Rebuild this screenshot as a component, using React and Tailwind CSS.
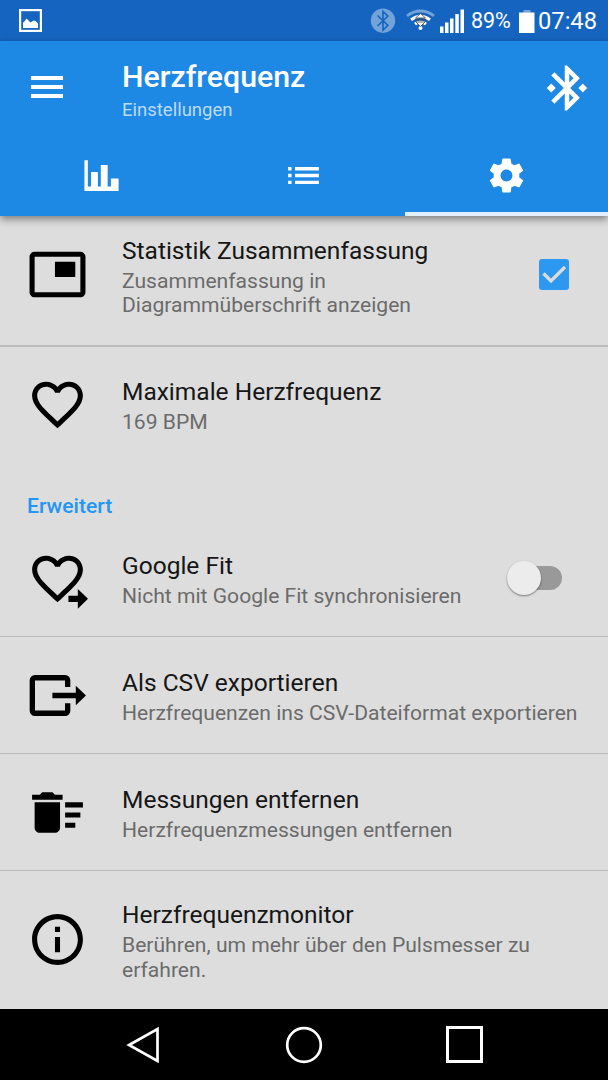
import React, { useState } from "react";

// material icon outlines, 24 x 24 grid
const paths = {
  pip: "M19 7h-8v6h8V7zm2-4H3c-1.1 0-2 .9-2 2v14c0 1.1.9 1.98 2 1.98h18c1.1 0 2-.88 2-1.98V5c0-1.1-.9-2-2-2zm0 16.01H3V4.98h18v14.03z",
  heart:
    "M16.5 3c-1.74 0-3.41.81-4.5 2.09C10.91 3.81 9.24 3 7.5 3 4.42 3 2 5.42 2 8.5c0 3.78 3.4 6.86 8.55 11.54L12 21.35l1.45-1.32C18.6 15.36 22 12.28 22 8.5 22 5.42 19.58 3 16.5 3zm-4.4 15.55l-.1.1-.1-.1C7.14 14.24 4 11.39 4 8.5 4 6.5 5.5 5 7.5 5c1.54 0 3.04.99 3.57 2.36h1.87C13.46 5.99 14.96 5 16.5 5c2 0 3.5 1.5 3.5 3.5 0 2.89-3.14 5.74-7.9 10.05z",
  heartArrow: "M16.3 18.8H20V16.100l4 3.900-4 3.900v-2.700h-3.700z",
  sweep:
    "M15 16h4v2h-4zm0-8h7v2h-7zm0 4h6v2h-6zM3 18c0 1.1.9 2 2 2h6c1.1 0 2-.9 2-2V8H3v10zM14 5h-3l-1-1H6L5 5H2v2h12z",
  info: "M11 17h2v-6h-2v6zm1-15C6.48 2 2 6.48 2 12s4.48 10 10 10 10-4.48 10-10S17.52 2 12 2zm0 18c-4.41 0-8-3.59-8-8s3.59-8 8-8 8 3.59 8 8-3.59 8-8 8zM11 9h2V7h-2v2z",
  list: "M3 13h2v-2H3v2zm0 4h2v-2H3v2zm0-8h2V7H3v2zm4 4h14v-2H7v2zm0 4h14v-2H7v2zM7 7v2h14V7H7z",
  gear: "M19.43 12.98c.04-.32.07-.64.07-.98s-.03-.66-.07-.98l2.11-1.65c.19-.15.24-.42.12-.64l-2-3.46c-.12-.22-.39-.3-.61-.22l-2.49 1c-.52-.4-1.08-.73-1.69-.98l-.38-2.65C14.46 2.18 14.25 2 14 2h-4c-.25 0-.46.18-.49.42l-.38 2.65c-.61.25-1.17.59-1.69.98l-2.49-1c-.23-.09-.49 0-.61.22l-2 3.46c-.13.22-.07.49.12.64l2.11 1.65c-.04.32-.07.65-.07.98s.03.66.07.98l-2.11 1.65c-.19.15-.24.42-.12.64l2 3.46c.12.22.39.3.61.22l2.49-1c.52.4 1.08.73 1.69.98l.38 2.65c.03.24.24.42.49.42h4c.25 0 .46-.18.49-.42l.38-2.65c.61-.25 1.17-.59 1.69-.98l2.49 1c.23.09.49 0 .61-.22l2-3.46c.12-.22.07-.49-.12-.64l-2.11-1.65zM12 15.5c-1.93 0-3.5-1.57-3.5-3.5s1.57-3.5 3.5-3.5 3.5 1.57 3.5 3.5-1.57 3.5-3.5 3.5z",
  bluetooth:
    "M7 12l-2-2-2 2 2 2 2-2zm10.71-4.29L12 2h-1v7.59L6.41 5 5 6.41 10.59 12 5 17.59 6.41 19 11 14.41V22h1l5.71-5.71-4.3-4.29 4.3-4.29zM13 5.83l1.88 1.88L13 9.59V5.83zm1.88 10.46L13 18.17v-3.76l1.88 1.88zM19 10l-2 2 2 2 2-2-2-2z",
  chart: "M2 3.100h2V18.400h1.900V9.900h4v8.500h1.700V5.800h4v12.600h1.900V13.800H22v7.200H2z",
};

function Icon({ d, className, children }) {
  return (
    <svg viewBox="0 0 24 24" fill="currentColor" className={className}>
      <path d={d} />
      {children}
    </svg>
  );
}

function StatusBar() {
  return (
    <div className="flex h-[41px] items-center bg-[#1565c0] pl-[19px] text-white">
      <svg viewBox="0 0 23 23" className="h-[23px] w-[23px] shrink-0">
        <rect x="1.1" y="1.1" width="20.8" height="20.8" fill="none" stroke="#fff" strokeWidth="2.2" />
        <path fill="#fff" d="M4 19v-5.500l1-.500 2.500-3.500 4 4 3-2 2 .500 2.500 2.500V19z" />
      </svg>

      <svg viewBox="0 0 102 30" className="ml-[327px] h-[30px] w-[102px] shrink-0">
        {/* bluetooth */}
        <circle cx="14" cy="14.700" r="12.2" fill="#73a3d9" />
        <path d="M8.500 9.500l10.400 9.800-4.900 4.700V5.400l4.900 4.700L8.500 20" fill="none" stroke="#1565c0" strokeWidth="1.6" />
        {/* wifi */}
        <path d="M38 9.800q13.500-9.500 27 0" fill="none" stroke="#73a3d9" strokeWidth="2.8" />
        <path d="M42 13.800q9.500-7 19 0" fill="none" stroke="#fff" strokeWidth="3" />
        <path d="M46 18q5.500-4 11 0" fill="none" stroke="#fff" strokeWidth="3" />
        <circle cx="51.500" cy="22" r="2" fill="#fff" />
        <path d="M51.500 7.500l5 4.500h-10zM51.500 20.500l4.500-4.500h-9z" fill="#fff" stroke="#444" strokeWidth=".8" />
        <path d="M46.500 14h10" stroke="#444" strokeWidth="1" />
        {/* signal */}
        <path fill="#fff" d="M71 20.500h3.500V27H71zM76 16.500h3.500V27H76zM81 12.500h3.500V27H81zM86.300 8h3.500v19h-3.500zM91.500 3.500H95V27h-3.500z" />
      </svg>

      <span className="w-[48px] shrink-0 pt-[2px] text-[21.500px] tracking-[-0.1px]">89%</span>
      <svg viewBox="0 0 16 24" className="h-[24px] w-[16px] shrink-0">
        <path fill="#73a3d9" d="M4.500 1h7v3h-7z" />
        <path fill="#fff" d="M0 3.500h15.500V24H0z" />
      </svg>
      <span className="ml-[3px] pt-[2px] text-[23.700px]">07:48</span>
    </div>
  );
}

function Header({ tab, setTab }) {
  const tabs = [paths.chart, paths.list, paths.gear];
  return (
    <header className="relative z-10 h-[175px] bg-[#1e88e5] text-white shadow-[0_3px_8px_rgba(0,0,0,0.45)]">
      <div className="flex h-[95px] pl-[31px]">
        <button className="mt-[35px] flex h-[22px] w-[32px] flex-col justify-between">
          <span className="h-[4px] w-full bg-white" />
          <span className="h-[4px] w-full bg-white" />
          <span className="h-[4px] w-full bg-white" />
        </button>
        <div className="ml-[59px] flex-1 pt-[18px]">
          <h1 className="text-[30.3px] leading-[36px] font-medium">Herzfrequenz</h1>
          <p className="mt-[4px] text-[18.5px] leading-[23px] text-[#bbdbf7]">Einstellungen</p>
        </div>
        <Icon d={paths.bluetooth} className="mt-[19.500px] mr-[14px] h-[54px] w-[54px]" />
      </div>

      <nav className="grid h-[80px] grid-cols-3">
        {tabs.map((d, i) => (
          <button
            key={i}
            onClick={() => setTab(i)}
            className={`flex items-center justify-center border-b-[4px] pt-[3px] ${
              tab === i ? "border-[#e1f0fc]" : "border-transparent"
            }`}
          >
            <Icon d={d} className="h-[41px] w-[41px]" />
          </button>
        ))}
      </nav>
    </header>
  );
}

function Row({ icon, title, text, className, children }) {
  return (
    <div className={`flex items-center border-[#bcbcbc] pl-[27px] ${className}`}>
      <div className="w-[95px] shrink-0">{icon}</div>
      <div className="flex-1 pt-[5px] whitespace-nowrap">
        <div className="text-[24.500px] leading-[28px] text-[#161616]">{title}</div>
        <div className="mt-[4px] text-[21.100px] leading-[24.500px] whitespace-pre-line text-[#6b6b6b]">{text}</div>
      </div>
      {children}
    </div>
  );
}

export default function App() {
  const [tab, setTab] = useState(2);
  const [summary, setSummary] = useState(true);
  const big = "h-[61px] w-[61px] overflow-visible text-black";

  return (
    <div className="flex h-[1080px] w-[608px] flex-col overflow-hidden bg-[#dddddd] font-[Roboto,sans-serif]">
      <StatusBar />
      <Header tab={tab} setTab={setTab} />

      <main className="flex-1 overflow-hidden">
        <Row
          className="-mt-[12px] h-[143px] border-b-2"
          icon={<Icon d={paths.pip} className={big} />}
          title="Statistik Zusammenfassung"
          text={"Zusammenfassung in\nDiagrammüberschrift anzeigen"}
        >
          <button
            onClick={() => setSummary(!summary)}
            className="mr-[39px] flex h-[31px] w-[30px] items-center justify-center rounded-[3px] bg-[#2c98f0]"
          >
            {summary && (
              <svg viewBox="0 0 30 31" className="h-[31px] w-[30px]">
                <path d="M4.500 14.500l7.500 7.500L26 8" fill="none" stroke="#dddddd" strokeWidth="3.2" />
              </svg>
            )}
          </button>
        </Row>
        <Row
          className="h-[114px]"
          icon={<Icon d={paths.heart} className={big} />}
          title="Maximale Herzfrequenz"
          text="169 BPM"
        />

        <h2 className="h-[59px] pt-[32px] pl-[27px] text-[21.100px] leading-[25px] font-medium text-[#2196f3]">
          Erweitert
        </h2>

        <Row
          className="h-[117px] border-b"
          icon={
            <Icon d={paths.heart} className={big}>
              <path d={paths.heartArrow} />
            </Icon>
          }
          title="Google Fit"
          text="Nicht mit Google Fit synchronisieren"
        >
          {/* switch, off */}
          <div className="mr-[46px] flex h-[24px] w-[48px] items-center rounded-full bg-[#999999]">
            <span className="-ml-[7px] h-[34px] w-[34px] rounded-full bg-[#ececec] shadow-[0_1px_2px_rgba(0,0,0,0.45)]" />
          </div>
        </Row>
        <Row
          className="h-[117px] border-b"
          icon={
            <svg viewBox="0 0 24 24" className={big}>
              <path
                d="M16 8.700V6a1 1 0 0 0-1-1H3.100a1 1 0 0 0-1 1v12a1 1 0 0 0 1 1H15a1 1 0 0 0 1-1v-3"
                fill="none"
                stroke="currentColor"
                strokeWidth="2.100"
              />
              <path d="M10 10.900h9.200V8.200l4 3.800-4 3.800V13.100H10z" fill="currentColor" />
            </svg>
          }
          title="Als CSV exportieren"
          text="Herzfrequenzen ins CSV-Dateiformat exportieren"
        />
        <Row
          className="h-[117px] border-b"
          icon={<Icon d={paths.sweep} className={big} />}
          title="Messungen entfernen"
          text="Herzfrequenzmessungen entfernen"
        />
        <Row
          className="h-[136px]"
          icon={<Icon d={paths.info} className={big} />}
          title="Herzfrequenzmonitor"
          text={"Berühren, um mehr über den Pulsmesser zu\nerfahren."}
        />
      </main>

      {/* android navigation */}
      <footer className="flex h-[71px] items-center justify-between bg-black pr-[125px] pl-[126px]">
        <svg viewBox="0 0 36 38" className="h-[38px] w-[36px]">
          <path d="M31.500 3v32L3 19z" fill="none" stroke="#fff" strokeWidth="2.700" />
        </svg>
        <svg viewBox="0 0 38 38" className="h-[38px] w-[38px]">
          <circle cx="19" cy="19" r="16.800" fill="none" stroke="#fff" strokeWidth="2.700" />
        </svg>
        <span className="h-[37px] w-[37px] border-[3px] border-white" />
      </footer>
    </div>
  );
}
